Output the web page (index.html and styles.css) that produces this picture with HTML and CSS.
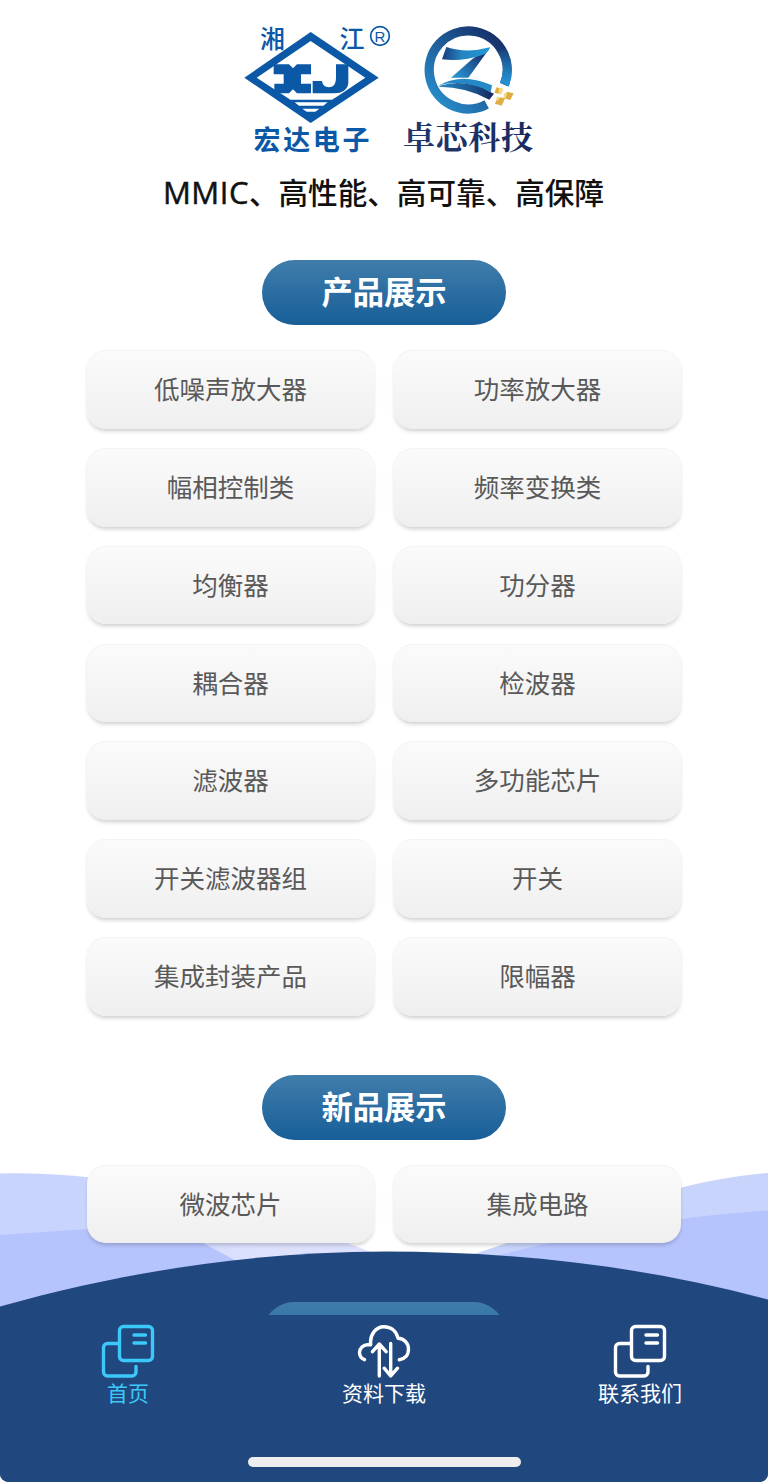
FILE: index.html
```
<!DOCTYPE html>
<html lang="zh-CN">
<head>
    <meta charset="UTF-8">
    <meta name="viewport" content="width=device-width, initial-scale=1.0">
    <title>宏达电子</title>
    <link rel="stylesheet" href="styles.css">
</head>
<body>
    <div id="app">
        <!-- Background waves -->
        <svg class="waves" viewBox="0 1163 768 320" aria-hidden="true">
            <defs>
                <linearGradient id="waveFade" x1="0" x2="1" y1="0" y2="0">
                    <stop offset="0.2" stop-color="#c8d4fd"/>
                    <stop offset="0.7" stop-color="#dde1fd"/>
                </linearGradient>
            </defs>
            <path fill="url(#waveFade)" d="M0 1173.5C110 1170 240 1200 376 1254V1300H0Z"/>
            <path fill="#b6c4fd" d="M0 1235L87 1229C140 1224 175 1229 203 1243L240 1263V1320H0Z"/>
            <path fill="#c8d4fc" d="M768 1173C670 1181 580 1220 474 1254V1300H768Z"/>
            <path fill="#b6c4fd" d="M768 1210.500C670 1217 590 1232 492 1257V1310H768Z"/>
            <path fill="#20487f" d="M0 1306.500C130 1270 260 1251.500 385 1251.500C510 1251.500 640 1265 768 1299.500V1483H0Z"/>
        </svg>

        <header class="header">
            <div class="logos">
                <svg class="logo-xj" viewBox="240 20 155 140">
                    <g transform="translate(230 15) scale(.33333)">
                        <path fill="#0a58a6" d="M242 51L446 188L242 324L43 188Z"/>
                        <path fill="#fff" d="M242 78L406 188L324 243L306 254H181L164 243L80 188Z"/>
                        <path fill="#0a58a6" d="M131 148H177L189 160L201 148H243V178H213V206H243V235H201L189 223L177 235H133V206H161V178H131ZM318 148H355V205Q350 235 312 235H248V198H276Q278 215 296 217Q318 217 318 190Z"/>
                        <path fill="#fff" d="M194 262H293L280 272H207ZM217 281H268L256 290H230Z"/>
                        <circle cx="450" cy="63" r="28" fill="none" stroke="#0a58a6" stroke-width="5"/>
                    </g>
                    <text class="xj-name" x="260" y="48">湘</text>
                    <text class="xj-name" x="339.500" y="47.500">江</text>
                    <text class="xj-mark" x="374.600" y="41.500">R</text>
                    <text class="xj-company" x="253.500" y="150" textLength="116">宏达电子</text>
                </svg>
                <svg class="logo-zx" viewBox="400 20 140 140">
                    <defs>
                        <linearGradient id="ring" x1="1" y1="0" x2="0.1" y2="0.9">
                            <stop offset="0.1" stop-color="#172f68"/>
                            <stop offset="0.5" stop-color="#1d5692"/>
                            <stop offset="1" stop-color="#278bc8"/>
                        </linearGradient>
                        <linearGradient id="ringEnd" gradientUnits="userSpaceOnUse" x1="0" y1="90" x2="0" y2="200">
                            <stop offset="0" stop-color="#2390d0" stop-opacity="0"/>
                            <stop offset="1" stop-color="#2390d0"/>
                        </linearGradient>
                        <linearGradient id="zTop" x1="0" x2="1">
                            <stop offset="0" stop-color="#163d7c"/>
                            <stop offset="0.4" stop-color="#2683c0"/>
                            <stop offset="1" stop-color="#2299d8"/>
                        </linearGradient>
                        <linearGradient id="zDown" gradientUnits="userSpaceOnUse" x1="262" y1="120" x2="190" y2="188">
                            <stop offset="0" stop-color="#173572"/>
                            <stop offset="1" stop-color="#2a91cf"/>
                        </linearGradient>
                        <linearGradient id="swoosh" x1="0" x2="1">
                            <stop offset="0" stop-color="#2686c3"/>
                            <stop offset="0.6" stop-color="#1c568f"/>
                            <stop offset="1" stop-color="#16245a"/>
                        </linearGradient>
                        <linearGradient id="zxText" x1="0" x2="1">
                            <stop offset="0" stop-color="#20386f"/>
                            <stop offset="1" stop-color="#172a60"/>
                        </linearGradient>
                    </defs>
                    <g transform="translate(395 15) scale(.33333)">
                        <path fill="none" stroke="url(#ring)" stroke-width="28" d="M328 209A117 117 0 1 0 275 268"/>
                        <path fill="none" stroke="url(#ringEnd)" stroke-width="28" d="M328 209A117 117 0 0 0 321 105"/>
                        <path fill="url(#zDown)" d="M285 98L220 188H168L232 132L262 112Z"/>
                        <path fill="url(#zTop)" d="M154 96Q215 116 285 97Q278 116 262 120Q205 140 141 133Z"/>
                        <path fill="#2589c8" d="M132 211Q202 172 291 211L287 232Q204 190 132 211Z"/>
                        <path fill="url(#swoosh)" d="M133 212Q210 190 284 230L297 236L283 254Q214 216 133 215Z"/>
                        <path fill="#dfae42" d="M305 217L325 222L318 238L298 233ZM335 230L356 235L346 255L326 250ZM307 245L330 250L320 272L300 266Z"/>
                        <path fill="#f5db8d" d="M313 219L325 222L318 238L310 236ZM326 236L337 231L332 249L326 250ZM307 245L316 247L308 258L303 256Z"/>
                    </g>
                    <text class="zx-company" x="403" y="149" textLength="130" fill="url(#zxText)">卓芯科技</text>
                </svg>
            </div>
            <p class="slogan"><span class="slogan-latin">MMIC</span>、高性能、高可靠、高保障</p>
        </header>

        <main>
            <section class="section">
                <h2 class="section-title">产品展示</h2>
                <div class="grid">
                    <a class="item">低噪声放大器</a>
                    <a class="item">功率放大器</a>
                    <a class="item">幅相控制类</a>
                    <a class="item">频率变换类</a>
                    <a class="item">均衡器</a>
                    <a class="item">功分器</a>
                    <a class="item">耦合器</a>
                    <a class="item">检波器</a>
                    <a class="item">滤波器</a>
                    <a class="item">多功能芯片</a>
                    <a class="item">开关滤波器组</a>
                    <a class="item">开关</a>
                    <a class="item">集成封装产品</a>
                    <a class="item">限幅器</a>
                </div>
            </section>

            <section class="section">
                <h2 class="section-title">新品展示</h2>
                <div class="grid">
                    <a class="item">微波芯片</a>
                    <a class="item">集成电路</a>
                </div>
            </section>

            <section class="section">
                <h2 class="section-title"></h2>
            </section>
        </main>

        <nav class="tabbar">
            <div class="tabs">
                <a class="tab active">
                    <svg class="tab-icon" viewBox="0 0 54 54">
                        <rect x="18.500" y="2.500" width="33" height="34" rx="4"/>
                        <path d="M18.500 19.500H6.500a4 4 0 0 0-4 4V48a4 4 0 0 0 4 4H31a4 4 0 0 0 4-4V42.500M33 11H44.500M33 19H44.500"/>
                    </svg>
                    <span>首页</span>
                </a>
                <a class="tab">
                    <svg class="tab-icon" viewBox="0 0 54 54">
                        <path d="M7.500 35.700C4.500 34.500 2.500 31.500 2.500 28.500C2.500 24 6.500 20.700 10.500 20.700H13.700C12.500 10.500 19 2.700 27 2.700C34.500 2.700 39.500 7.500 41 14.200C47 14.500 51.500 19 51.500 25C51.500 31 48 35 42.300 35.700M22.300 52V20.500M15.500 27.700L22.300 20L29.100 27.700M33.700 19.500V51.500M27.200 44.200L33.700 52L40.500 44.200"/>
                    </svg>
                    <span>资料下载</span>
                </a>
                <a class="tab">
                    <svg class="tab-icon" viewBox="0 0 54 54">
                        <rect x="18.500" y="2.500" width="33" height="34" rx="4"/>
                        <path d="M18.500 19.500H6.500a4 4 0 0 0-4 4V48a4 4 0 0 0 4 4H31a4 4 0 0 0 4-4V42.500M33 11H44.500M33 19H44.500"/>
                    </svg>
                    <span>联系我们</span>
                </a>
            </div>
            <div class="home-indicator"></div>
        </nav>
    </div>
</body>
</html>
```
FILE: styles.css
```
:root {
    --navy: #20487f;
    --accent: #3cc8f8;
    --logo-blue: #0a58a6;
    --text: #595959;
}

* {
    box-sizing: border-box;
}

body {
    margin: 0;
    background: #fff;
    font-family: "Noto Sans CJK SC", sans-serif;
    color: var(--text);
}

#app {
    position: relative;
    height: 1483px;
    overflow: hidden;
    display: flex;
    flex-direction: column;
    border-bottom: 1px solid #fff;
    border-radius: 0 0 9px 9px;
}

/* Decoration behind the content */
.waves {
    position: absolute;
    left: 0;
    bottom: -1px;
    width: 100%;
    height: 320px;
    z-index: -1;
}

/* --- Header --- */
.header {
    flex-shrink: 0;
    height: 260px;
    padding-top: 20px;
}

.logos {
    display: flex;
    justify-content: center;
    gap: 5px;
    height: 140px;
    margin-left: 12px;
}

.logo-xj {
    width: 155px;
    height: 140px;
}

.logo-zx {
    width: 140px;
    height: 140px;
}

.xj-name {
    font-size: 25px;
    font-weight: 500;
    fill: var(--logo-blue);
}

.xj-mark {
    font-family: "Liberation Sans", sans-serif;
    font-size: 15px;
    fill: var(--logo-blue);
}

.xj-company {
    font-size: 27px;
    font-weight: 700;
    fill: var(--logo-blue);
}

.zx-company {
    font-family: "Noto Serif CJK SC", "Noto Sans CJK SC", serif;
    font-size: 32px;
    font-weight: 700;
}

.slogan {
    margin: 11px 0 0;
    padding-right: 1px;
    text-align: center;
    font-size: 29.6px;
    line-height: 42px;
    color: #111;
    font-weight: 500;
    white-space: nowrap;
}

.slogan-latin {
    font-family: "Open Sans", "Noto Sans", sans-serif;
    font-size: 31px;
    font-weight: 400;
    line-height: 1;
    letter-spacing: 0.5px;
    -webkit-text-stroke: 0.5px #111;
}

/* --- Sections --- */
main {
    flex: 1;
    min-height: 0;
    overflow: hidden;
}

.section {
    padding: 0 87px;
    margin-bottom: 59px;
}

.section-title {
    width: 244px;
    height: 65px;
    margin: 0 auto 25.3px;
    border-radius: 33px;
    background: linear-gradient(#407dab, #175e98);
    color: #fff;
    font-size: 31.3px;
    font-weight: 700;
    line-height: 62px;
    text-align: center;
}

.grid {
    display: grid;
    grid-template-columns: 1fr 1fr;
    gap: 19.3px 20px;
}

.item {
    height: 78.5px;
    border-radius: 19px;
    background: linear-gradient(#fbfbfb, #efefef);
    box-shadow: 0 3px 4px -1px rgba(0, 0, 0, 0.2), inset 0 1px 0 #f3f3f3;
    font-size: 25.5px;
    line-height: 75.5px;
    text-align: center;
}

/* --- Tab bar --- */
.tabbar {
    flex-shrink: 0;
    height: 167px;
    padding-top: 9px;
    background: var(--navy);
}

.tabs {
    display: flex;
    height: 133px;
}

.tab {
    flex: 1;
    display: flex;
    flex-direction: column;
    align-items: center;
    color: #fff;
    font-size: 21px;
    line-height: 29px;
}

.tab.active {
    color: var(--accent);
}

.tab-icon {
    width: 54px;
    height: 54px;
    fill: none;
    stroke: currentColor;
    stroke-width: 3.4;
    stroke-linecap: round;
    stroke-linejoin: round;
}

.home-indicator {
    width: 273px;
    height: 10px;
    margin: 0 auto;
    border-radius: 5px;
    background: #eee;
}
```
